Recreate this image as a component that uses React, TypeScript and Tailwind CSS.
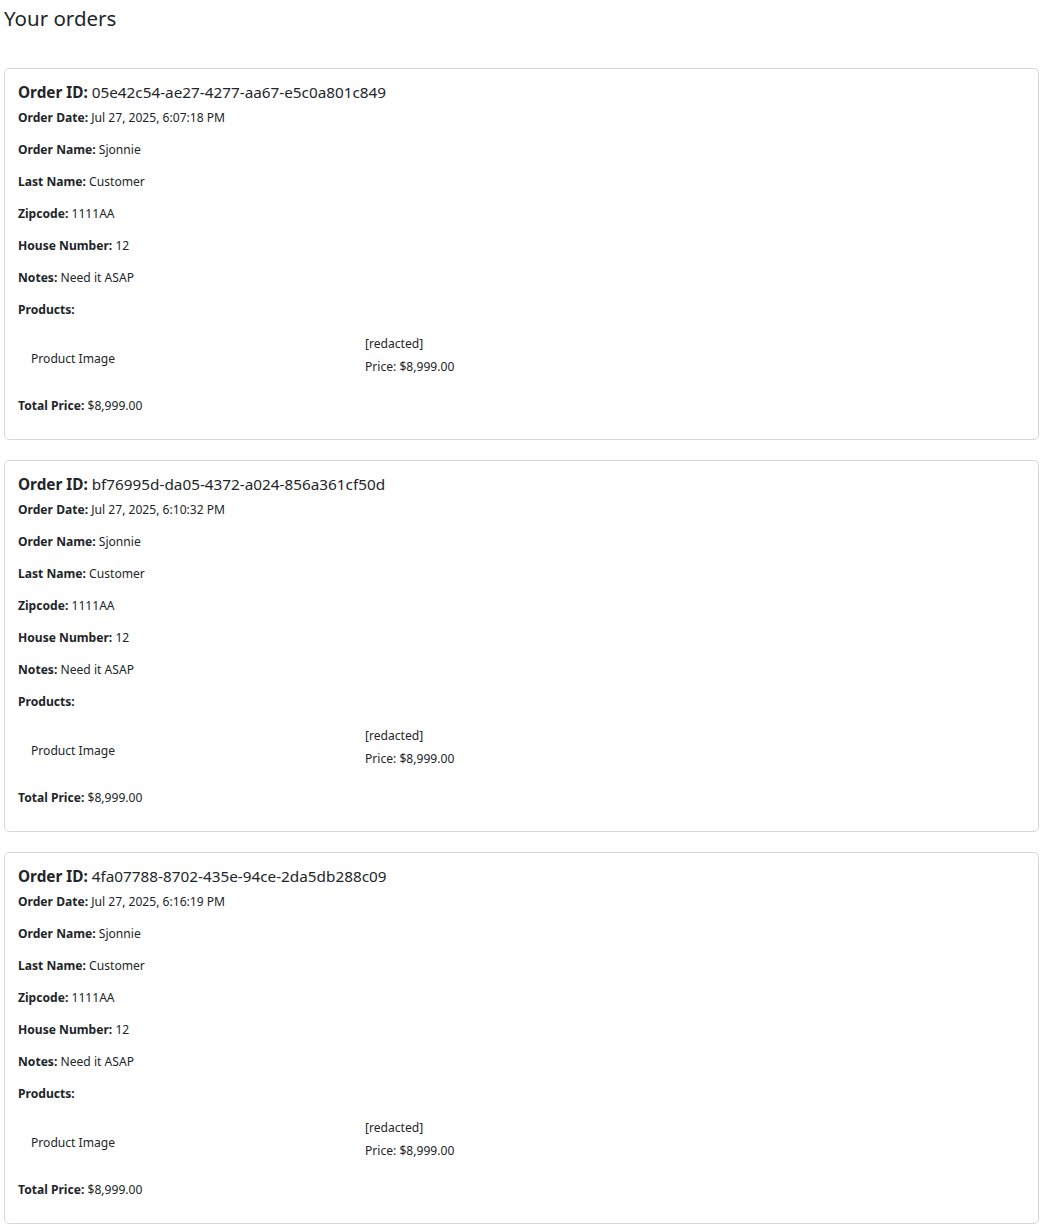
const orders = [
  { id: "05e42c54-ae27-4277-aa67-e5c0a801c849", date: "Jul 27, 2025, 6:07:18 PM" },
  { id: "bf76995d-da05-4372-a024-856a361cf50d", date: "Jul 27, 2025, 6:10:32 PM" },
  { id: "4fa07788-8702-435e-94ce-2da5db288c09", date: "Jul 27, 2025, 6:16:19 PM" },
];

function Field({ label, value }: { label: string; value?: string }) {
  return (
    <p className="h-8 text-[12.1px] leading-[18px]">
      <span className="font-bold">{label}</span>
      {value ? ` ${value}` : null}
    </p>
  );
}

function OrderCard({ id, date }: { id: string; date: string }) {
  return (
    <div className="h-[372px] rounded-[5px] border border-[#d6d6d6] px-[13px] pt-[12px]">
      <h2 className="h-[22px] text-[15.3px] leading-[22px]">
        <span className="font-bold">Order ID:</span> {id}
      </h2>
      <p className="mt-[6px] h-8 text-[12.1px] leading-[18px]">
        <span className="font-bold">Order Date:</span> {date}
      </p>
      <Field label="Order Name:" value="Sjonnie" />
      <Field label="Last Name:" value="Customer" />
      <Field label="Zipcode:" value="1111AA" />
      <Field label="House Number:" value="12" />
      <Field label="Notes:" value="Need it ASAP" />
      <Field label="Products:" />
      <div className="flex h-[60px] text-[12.1px] leading-[18px]">
        <div className="flex w-[347px] items-center pb-[9px] pl-[13px]">Product Image</div>
        <div className="flex flex-col gap-[5px] pt-[2px]">
          <span>[redacted]</span>
          <span>Price: $8,999.00</span>
        </div>
      </div>
      <p className="mt-[4px] text-[12.1px] leading-[18px]">
        <span className="font-bold">Total Price:</span> $8,999.00
      </p>
    </div>
  );
}

export default function App() {
  return (
    <div className="min-h-screen bg-white px-1 text-[#212529] [font-family:'Noto_Sans',sans-serif]">
      <h1 className="pt-[3px] text-[20.5px] leading-[30px]">Your orders</h1>
      <div className="mt-[35px] flex flex-col gap-5">
        {orders.map((o) => (
          <OrderCard key={o.id} id={o.id} date={o.date} />
        ))}
      </div>
    </div>
  );
}
